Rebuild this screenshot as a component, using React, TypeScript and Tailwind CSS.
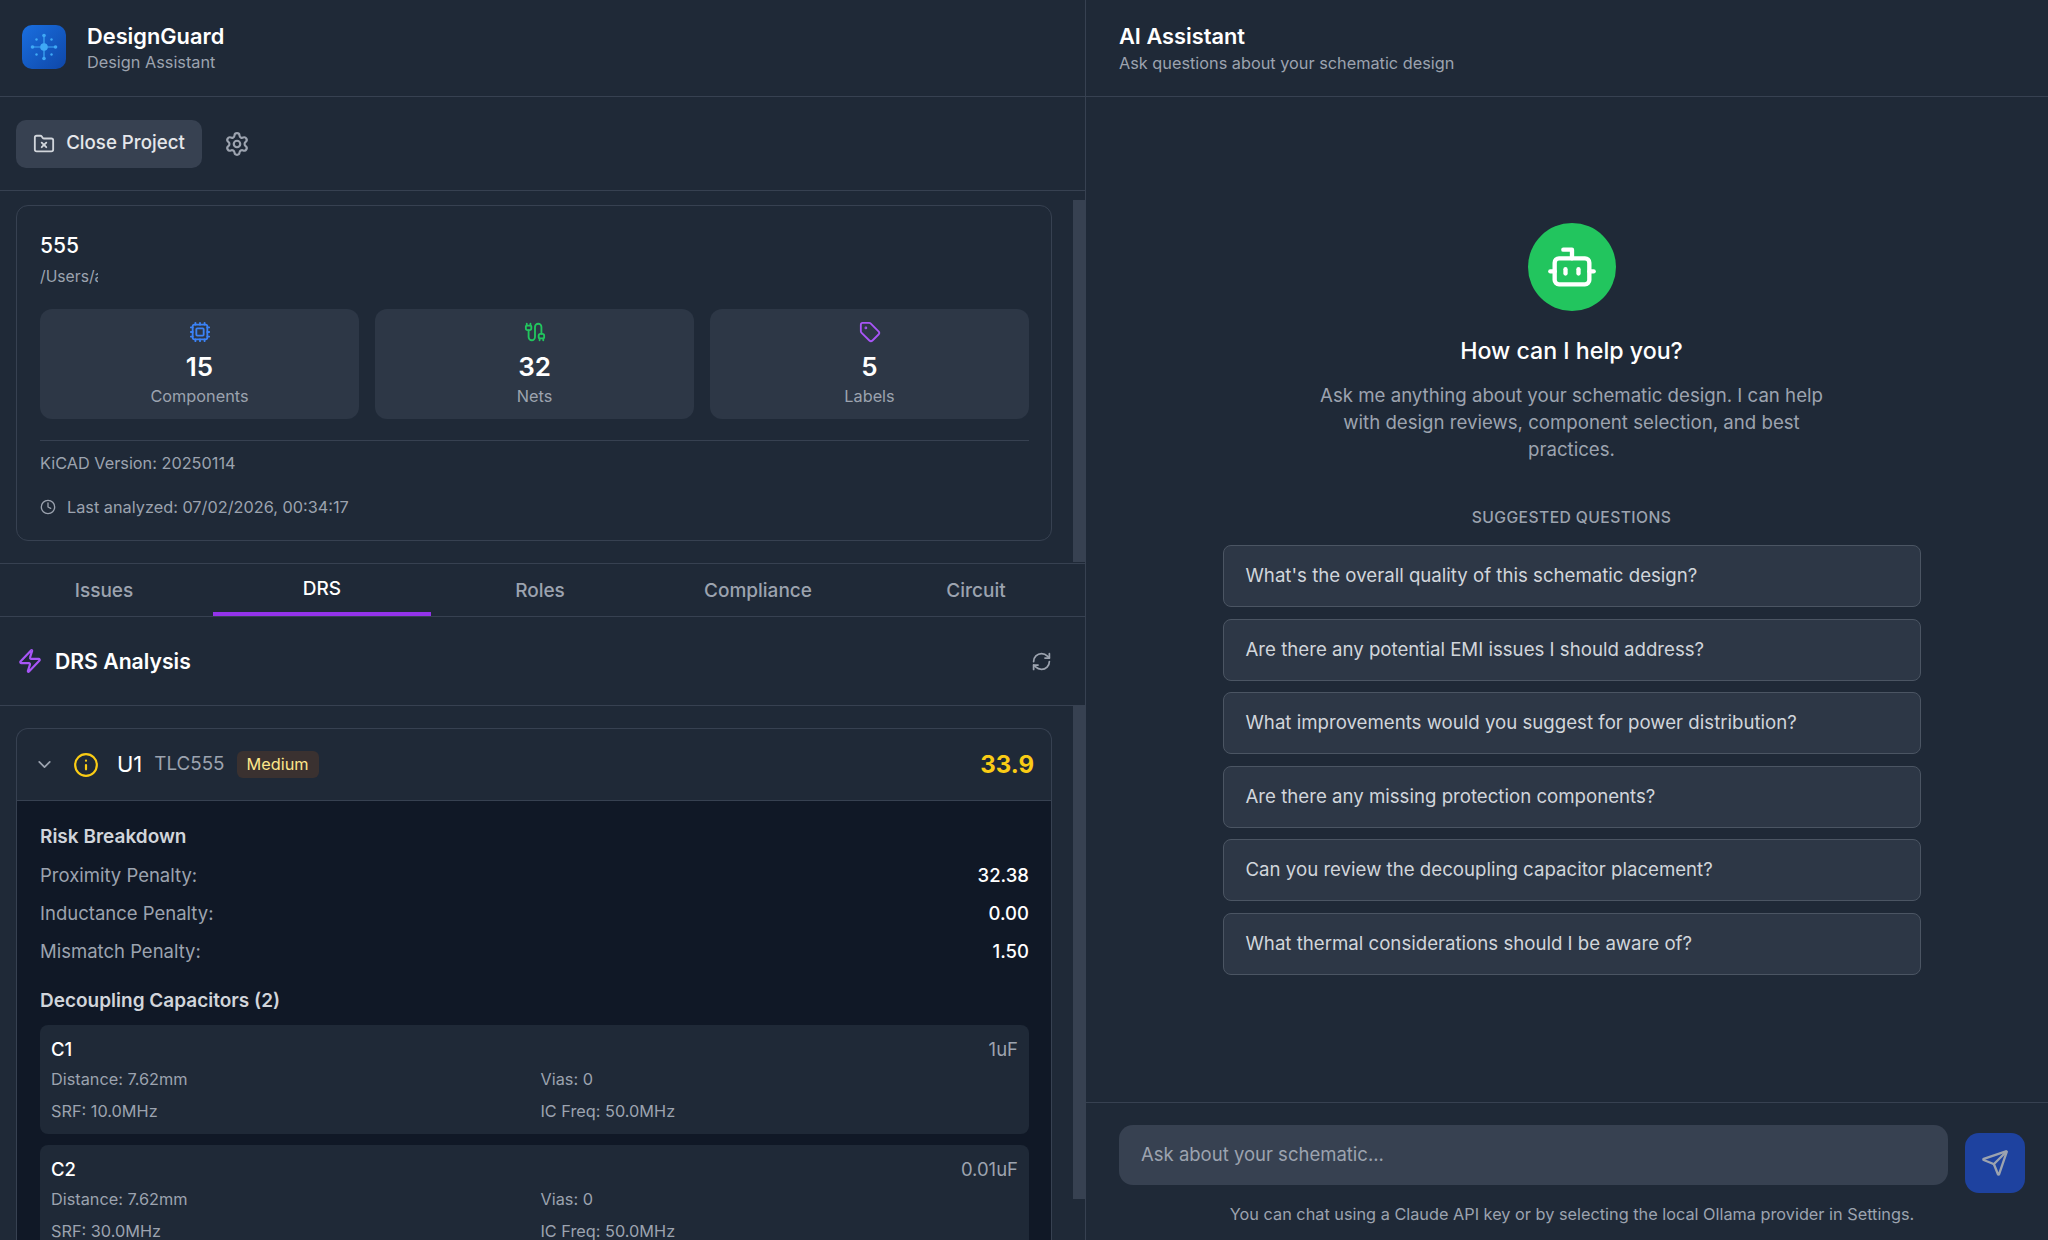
import { Bot, Cable, ChevronDown, Clock, Cpu, FolderX, Info, RefreshCw, Send, Settings, Tag, Zap } from "lucide-react";

const tabs = ["Issues", "DRS", "Roles", "Compliance", "Circuit"];

const stats = [
  { icon: <Cpu size={22} strokeWidth={2} className="text-[#3b82f6]" />, value: "15", label: "Components" },
  { icon: <Cable size={22} strokeWidth={2} className="text-[#22c55e]" />, value: "32", label: "Nets" },
  { icon: <Tag size={22} strokeWidth={2} className="text-[#a855f7]" />, value: "5", label: "Labels" },
];

const penalties = [
  { label: "Proximity Penalty:", value: "32.38" },
  { label: "Inductance Penalty:", value: "0.00" },
  { label: "Mismatch Penalty:", value: "1.50" },
];

const capacitors = [
  { name: "C1", value: "1uF", srf: "10.0MHz" },
  { name: "C2", value: "0.01uF", srf: "30.0MHz" },
];

const questions = [
  "What's the overall quality of this schematic design?",
  "Are there any potential EMI issues I should address?",
  "What improvements would you suggest for power distribution?",
  "Are there any missing protection components?",
  "Can you review the decoupling capacitor placement?",
  "What thermal considerations should I be aware of?",
];

/** App logo: blue tile with a small network mark */
function Logo() {
  return (
    <div className="w-[44px] h-[44px] rounded-[10px] bg-gradient-to-br from-[#1a6fe0] to-[#0f47a8] flex items-center justify-center shrink-0">
      <svg width="30" height="30" viewBox="0 0 30 30" fill="none">
        <path d="M15 3v24M3 15h24" stroke="#3fa9f5" strokeWidth="1.2" />
        <circle cx="15" cy="15" r="3.8" fill="#3fa9f5" />
        <circle cx="15" cy="3.5" r="1.8" fill="#3fa9f5" />
        <circle cx="15" cy="26.5" r="1.8" fill="#3fa9f5" />
        <circle cx="3.5" cy="15" r="1.8" fill="#3fa9f5" />
        <circle cx="26.5" cy="15" r="1.8" fill="#3fa9f5" />
        <circle cx="7.5" cy="7.5" r="1.2" fill="#3fa9f5" />
        <circle cx="22.5" cy="7.5" r="1.2" fill="#3fa9f5" />
        <circle cx="7.5" cy="22.5" r="1.2" fill="#3fa9f5" />
        <circle cx="22.5" cy="22.5" r="1.2" fill="#3fa9f5" />
      </svg>
    </div>
  );
}

function ProjectCard() {
  return (
    <div className="h-[336px] border border-[#374151] rounded-xl pl-[23px] pr-[22px] pt-[25px]">
      <div className="text-[21px] leading-[30px] font-medium text-white">555</div>
      <div className="w-[58px] overflow-hidden whitespace-nowrap mt-[4px] text-[15.7px] leading-[24px] text-[#9ca3af]">/Users/a</div>
      <div className="grid grid-cols-3 gap-4 mt-[20px]">
        {stats.map((s) => (
          <div key={s.label} className="h-[110px] rounded-xl bg-[#2d3746] flex flex-col items-center pt-[12px]">
            {s.icon}
            <div className="text-[26px] leading-[34px] font-semibold text-white mt-[7px]">{s.value}</div>
            <div className="text-[16.3px] leading-[22px] text-[#9ca3af] mt-[1px]">{s.label}</div>
          </div>
        ))}
      </div>
      <div className="border-t border-[#374151] mt-[21px] pt-[11px] text-[16.3px] leading-[22px] text-[#9ca3af]">
        <div>KiCAD Version: 20250114</div>
        <div className="flex items-center gap-[11px] mt-[22px]">
          <Clock size={16} />
          <span>Last analyzed: 07/02/2026, 00:34:17</span>
        </div>
      </div>
    </div>
  );
}

function DrsCard() {
  return (
    <div className="border border-[#374151] border-b-0 rounded-t-xl">
      <div className="h-[71px] flex items-center pl-[17px] pr-[17px]">
        <ChevronDown size={21} className="text-[#9ca3af]" />
        <Info size={26} className="text-[#facc15] ml-[18px]" />
        <span className="text-[22px] text-white ml-[18px]">U1</span>
        <span className="text-[18.8px] text-[#9ca3af] ml-[12px]">TLC555</span>
        <span className="h-[27px] px-[10px] rounded-md bg-[#3a3130] text-[#fde68a] text-[16.3px] leading-[27px] ml-[12px]">Medium</span>
        <span className="ml-auto text-[24px] font-bold text-[#facc15]">33.9</span>
      </div>
      <div className="border-t border-[#374151] bg-[#101826] pl-[23px] pr-[22px] pt-[23px] h-[600px]">
        <div className="text-[19px] leading-[26px] font-semibold text-[#d1d5db]">Risk Breakdown</div>
        <div className="mt-[12px] flex flex-col gap-[12px]">
          {penalties.map((p) => (
            <div key={p.label} className="flex justify-between text-[18.5px] leading-[26px]">
              <span className="text-[#9ca3af]">{p.label}</span>
              <span className="font-medium text-white">{p.value}</span>
            </div>
          ))}
        </div>
        <div className="mt-[24px] text-[19px] leading-[26px] font-semibold text-[#d1d5db]">Decoupling Capacitors (2)</div>
        <div className="mt-[11px] flex flex-col gap-[11px]">
          {capacitors.map((c) => (
            <div key={c.name} className="h-[109px] rounded-lg bg-[#1f2937] px-[11px] pt-[11px]">
              <div className="flex justify-between text-[18.5px] leading-[26px]">
                <span className="font-medium text-white">{c.name}</span>
                <span className="text-[#9ca3af]">{c.value}</span>
              </div>
              <div className="grid grid-cols-2 gap-x-[12px] gap-y-[10px] text-[16.3px] leading-[22px] text-[#9ca3af] mt-[6px]">
                <span>Distance: 7.62mm</span>
                <span>Vias: 0</span>
                <span>SRF: {c.srf}</span>
                <span>IC Freq: 50.0MHz</span>
              </div>
            </div>
          ))}
        </div>
      </div>
    </div>
  );
}

function LeftPanel() {
  return (
    <div className="w-[1086px] shrink-0 h-full flex flex-col border-r border-[#374151]">
      <header className="h-[97px] shrink-0 border-b border-[#374151] flex items-center pl-[22px] pb-[3px]">
        <Logo />
        <div className="ml-[21px] mt-[3px]">
          <div className="text-[21.8px] leading-[28px] font-semibold text-white">DesignGuard</div>
          <div className="text-[16.3px] leading-[24px] text-[#9ca3af]">Design Assistant</div>
        </div>
      </header>

      <div className="h-[94px] shrink-0 border-b border-[#374151] flex items-center pl-[16px] gap-[22px]">
        <button className="h-[48px] w-[186px] rounded-[10px] bg-[#374151] flex items-center justify-center gap-[11px] text-[18.7px] font-medium text-[#e5e7eb]">
          <FolderX size={22} className="text-[#d1d5db]" />
          Close Project
        </button>
        <Settings size={26} className="text-[#9ca3af]" />
      </div>

      <div className="h-[373px] shrink-0 flex border-b border-[#374151]">
        <div className="flex-1 pl-[16px] pr-[21px] pt-[14px]">
          <ProjectCard />
        </div>
        <div className="w-[12px] h-[362px] mt-[9px] bg-[#374151]" />
      </div>

      <nav className="h-[53px] shrink-0 border-b border-[#374151] flex overflow-hidden">
        <div className="flex -ml-[5px]">
          {tabs.map((t) =>
            t === "DRS" ? (
              <div key={t} className="w-[218px] h-full pt-[2px] border-b-[4px] border-[#9333ea] flex items-center justify-center text-[19px] font-medium text-white">
                {t}
              </div>
            ) : (
              <div key={t} className="w-[218px] h-full pt-[2px] flex items-center justify-center text-[19px] font-medium text-[#9ca3af]">
                {t}
              </div>
            ),
          )}
        </div>
      </nav>

      <div className="h-[89px] shrink-0 border-b border-[#374151] flex items-center pl-[17px] pr-[33px]">
        <Zap size={26} className="text-[#a855f7]" />
        <h2 className="ml-[12px] mt-[1px] text-[21.2px] font-semibold text-white">DRS Analysis</h2>
        <RefreshCw size={21} className="ml-auto text-[#9ca3af]" />
      </div>

      <div className="flex-1 min-h-0 flex overflow-hidden">
        <div className="flex-1 pl-[16px] pr-[21px] pt-[22px]">
          <DrsCard />
        </div>
        <div className="w-[12px] h-[493px] bg-[#374151]" />
      </div>
    </div>
  );
}

function RightPanel() {
  return (
    <div className="flex-1 min-w-0 h-full flex flex-col">
      <header className="h-[97px] shrink-0 border-b border-[#374151] pl-[33px] pt-[21px]">
        <h1 className="text-[21.8px] leading-[31px] font-semibold text-white">AI Assistant</h1>
        <p className="text-[16.3px] leading-[22px] text-[#9ca3af]">Ask questions about your schematic design</p>
      </header>

      <main className="flex-1 min-h-0 flex flex-col items-center pt-[126px] pl-[9px]">
        <div className="w-[88px] h-[88px] rounded-full bg-[#22c55e] flex items-center justify-center">
          <Bot size={52} strokeWidth={2} className="text-white" />
        </div>
        <h3 className="mt-[24px] text-[23.2px] leading-[32px] font-medium text-white">How can I help you?</h3>
        <p className="mt-[15px] w-[522px] text-center text-[18.65px] leading-[27px] text-[#9ca3af]">
          Ask me anything about your schematic design. I can help with design reviews, component selection, and best practices.
        </p>
        <div className="mt-[44px] text-[15.7px] leading-[22px] font-medium uppercase tracking-[0.4px] text-[#9ca3af]">Suggested questions</div>
        <div className="mt-[16px] w-[698px] flex flex-col gap-[11.6px]">
          {questions.map((q) => (
            <button key={q} className="h-[62px] rounded-lg border border-[#4b5563] bg-[#2d3746] px-[22px] text-left text-[18.65px] text-[#d1d5db]">
              {q}
            </button>
          ))}
        </div>
      </main>

      <footer className="h-[138px] shrink-0 border-t border-[#374151] pr-[23px] pl-[33px] pt-[22px]">
        <div className="flex gap-[17px]">
          <div className="flex-1 h-[60px] rounded-[14px] bg-[#374151] pl-[22px] flex items-center text-[18.5px] text-[#9ca3af]">
            Ask about your schematic...
          </div>
          <button className="w-[60px] h-[60px] mt-[8px] rounded-[14px] bg-[#1e429f] flex items-center justify-center">
            <Send size={28} className="text-[#9ca3af]" />
          </button>
        </div>
        <p className="mt-[10px] text-center text-[16.3px] leading-[22px] text-[#9ca3af]">
          You can chat using a Claude API key or by selecting the local Ollama provider in Settings.
        </p>
      </footer>
    </div>
  );
}

export default function App() {
  return (
    <div className="w-[2048px] h-[1240px] overflow-hidden flex bg-[#1f2937] font-['Inter',sans-serif]">
      <LeftPanel />
      <RightPanel />
    </div>
  );
}
